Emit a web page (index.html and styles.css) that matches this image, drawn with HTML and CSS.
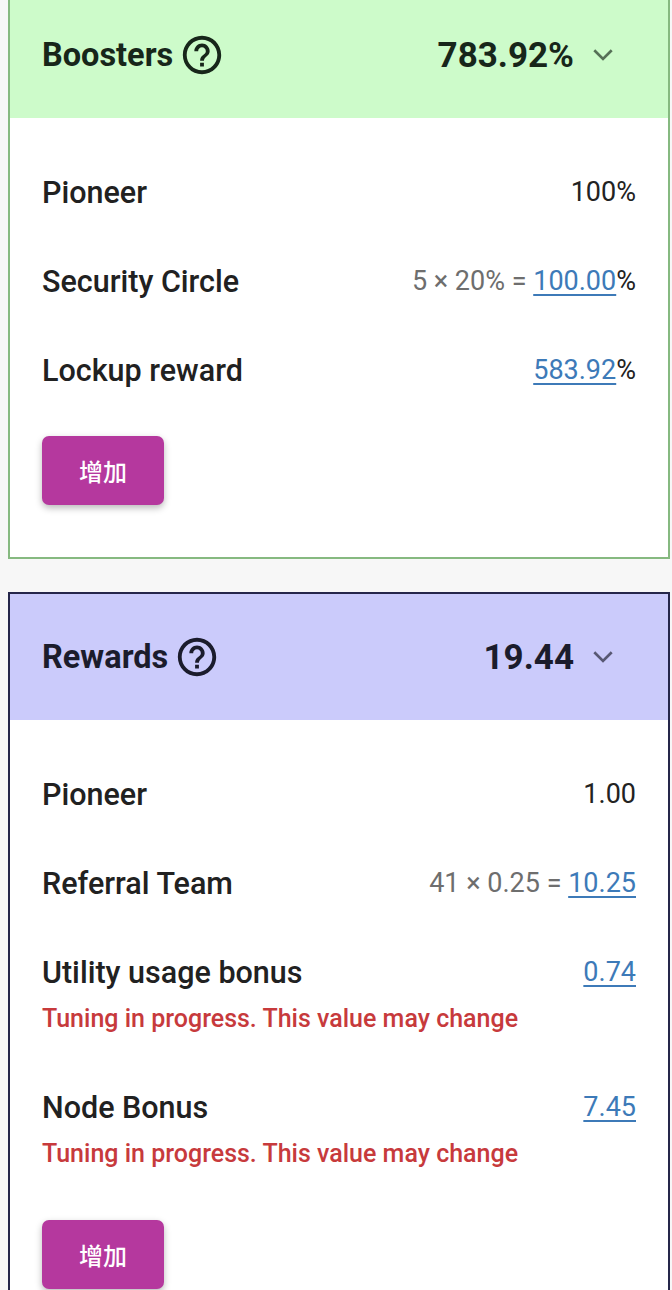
FILE: index.html
```html
<html lang="en">

<head>
    <meta charset="UTF-8">
    <meta name="viewport" content="width=device-width, initial-scale=1.0">
    <title>Boosters &amp; Rewards</title>
    <link rel="stylesheet" href="styles.css">
</head>

<body>
    <div class="page">
        <div class="card card-boosters">
            <div class="card-head">
                <span class="card-title">Boosters</span>
                <svg class="help" viewBox="0 0 24 24">
                    <path d="M11 18h2v-2h-2v2zm1-16C6.48 2 2 6.48 2 12s4.48 10 10 10 10-4.48 10-10S17.52 2 12 2zm0 18c-4.41 0-8-3.59-8-8s3.59-8 8-8 8 3.59 8 8-3.59 8-8 8zm0-14c-2.21 0-4 1.79-4 4h2c0-1.1.9-2 2-2s2 .9 2 2c0 2-3 1.75-3 5h2c0-2.25 3-2.5 3-5 0-2.21-1.79-4-4-4z" />
                </svg>
                <span class="card-total">783.92%</span>
                <svg class="chevron" viewBox="0 0 24 24">
                    <polyline points="6.5,9 12,14.5 17.5,9" />
                </svg>
            </div>
            <div class="card-body">
                <div class="item">
                    <div class="line">
                        <span class="label">Pioneer</span>
                        <span class="value">100%</span>
                    </div>
                </div>
                <div class="item">
                    <div class="line">
                        <span class="label">Security Circle</span>
                        <span class="value"><span class="calc">5 × 20% = </span><a class="link">100.00</a>%</span>
                    </div>
                </div>
                <div class="item">
                    <div class="line">
                        <span class="label">Lockup reward</span>
                        <span class="value"><a class="link">583.92</a>%</span>
                    </div>
                </div>
                <button class="btn">增加</button>
            </div>
        </div>

        <div class="card card-rewards">
            <div class="card-head">
                <span class="card-title">Rewards</span>
                <svg class="help" viewBox="0 0 24 24">
                    <path d="M11 18h2v-2h-2v2zm1-16C6.48 2 2 6.48 2 12s4.48 10 10 10 10-4.48 10-10S17.52 2 12 2zm0 18c-4.41 0-8-3.59-8-8s3.59-8 8-8 8 3.59 8 8-3.59 8-8 8zm0-14c-2.21 0-4 1.79-4 4h2c0-1.1.9-2 2-2s2 .9 2 2c0 2-3 1.75-3 5h2c0-2.25 3-2.5 3-5 0-2.21-1.79-4-4-4z" />
                </svg>
                <span class="card-total">19.44</span>
                <svg class="chevron" viewBox="0 0 24 24">
                    <polyline points="6.5,9 12,14.5 17.5,9" />
                </svg>
            </div>
            <div class="card-body">
                <div class="item">
                    <div class="line">
                        <span class="label">Pioneer</span>
                        <span class="value">1.00</span>
                    </div>
                </div>
                <div class="item">
                    <div class="line">
                        <span class="label">Referral Team</span>
                        <span class="value"><span class="calc">41 × 0.25 = </span><a class="link">10.25</a></span>
                    </div>
                </div>
                <div class="item">
                    <div class="line">
                        <span class="label">Utility usage bonus</span>
                        <span class="value"><a class="link">0.74</a></span>
                    </div>
                    <p class="note">Tuning in progress. This value may change</p>
                </div>
                <div class="item">
                    <div class="line">
                        <span class="label">Node Bonus</span>
                        <span class="value"><a class="link">7.45</a></span>
                    </div>
                    <p class="note">Tuning in progress. This value may change</p>
                </div>
                <button class="btn">增加</button>
            </div>
        </div>
    </div>
</body>

</html>
```

FILE: styles.css
```css
body {
    margin: 0;
    padding: 0;
    background-color: #f7f7f7;
    font-family: Roboto, "Noto Sans CJK SC", sans-serif;
    color: #212121;
    overflow: hidden;
}

.page {
    padding: 0 2px 0 8px;
}

.card {
    background-color: #fff;
    border: 2px solid;
}

.card-boosters {
    margin-top: -10px;
    border-color: #86b980;
}

.card-rewards {
    margin-top: 33px;
    border-color: #25264a;
}

.card-head {
    height: 126px;
    padding: 0 46px 0 32px;
    display: flex;
    align-items: center;
}

.card-boosters .card-head {
    background-color: #cdfbca;
    color: #17261a;
}

.card-rewards .card-head {
    background-color: #cbcbfb;
    color: #1b1c2c;
}

.card-title {
    font-size: 32.5px;
    font-weight: 700;
}

.help {
    width: 46px;
    height: 46px;
    margin-left: 6px;
    fill: currentColor;
}

.card-total {
    margin-left: auto;
    font-size: 35px;
    font-weight: 700;
}

.chevron {
    width: 38px;
    height: 38px;
    margin-left: 10px;
    fill: none;
    stroke: currentColor;
    stroke-width: 1.7;
    opacity: .65;
}

.card-body {
    padding: 30px 32px 52px;
}

.card-rewards .card-body {
    padding-bottom: 40px;
}

.item {
    padding: 26px 0;
}

.line {
    display: flex;
    justify-content: space-between;
    align-items: center;
    line-height: 37px;
}

.label {
    font-size: 30.5px;
    font-weight: 500;
}

.value {
    font-size: 27px;
    color: #222;
}

.calc {
    color: #6e6e6e;
}

.link {
    color: #3d7ab8;
    text-decoration: underline;
    text-decoration-thickness: 2px;
    text-underline-offset: 4px;
}

.note {
    margin: 13px 0 3px;
    line-height: 30px;
    font-size: 25px;
    font-weight: 500;
    color: #c73a3c;
}

.btn {
    display: block;
    margin-top: 21px;
    width: 122px;
    height: 69px;
    border: 0;
    border-radius: 7px;
    background-color: #b5389e;
    color: #fff;
    font-family: "Noto Sans CJK SC", sans-serif;
    font-size: 24px;
    font-weight: 500;
    box-shadow: 0 3px 7px rgba(0, 0, 0, .28);
}

.card-rewards .btn {
    margin-top: 22px;
}
```
